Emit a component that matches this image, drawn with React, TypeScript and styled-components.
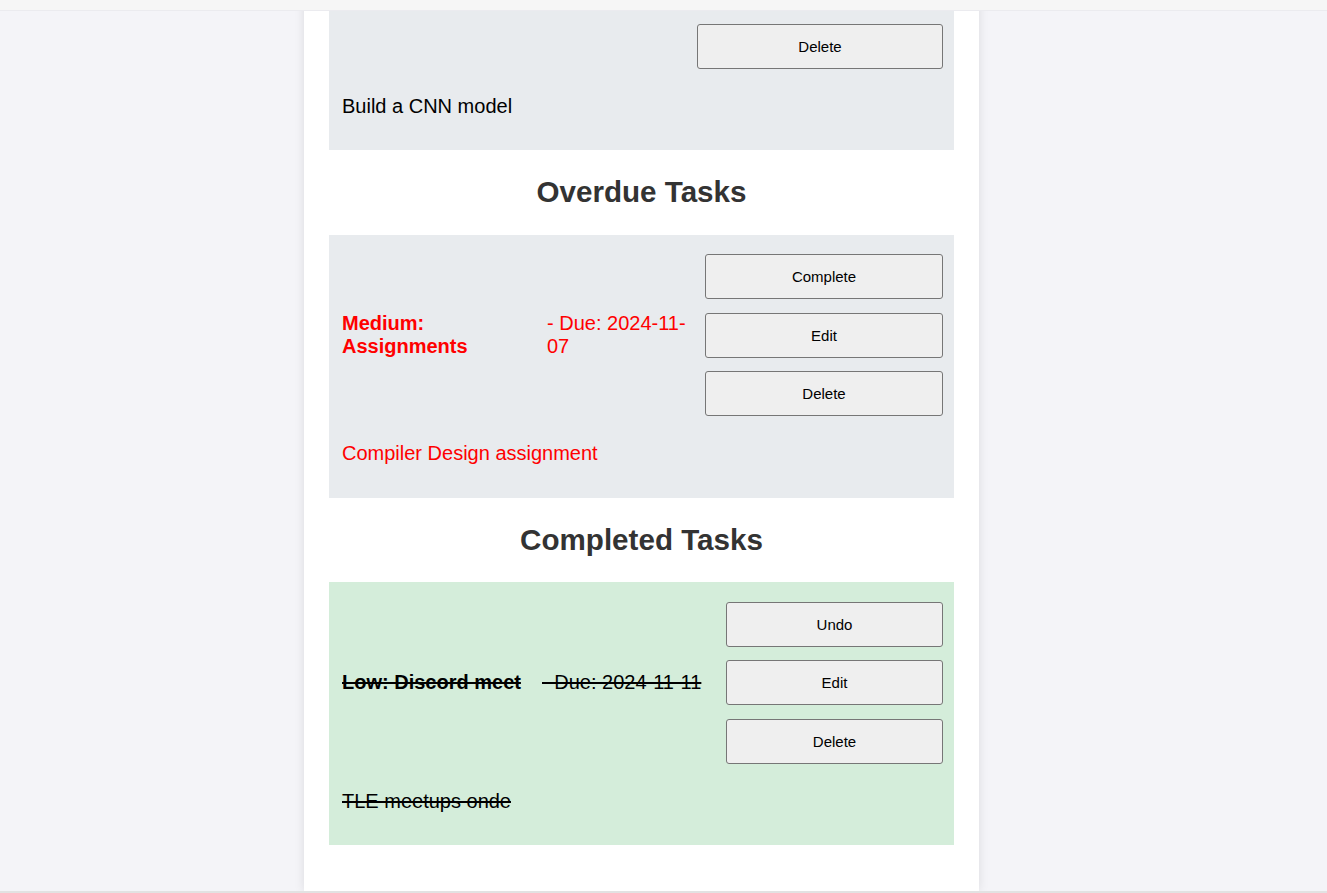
import React from "react";
import styled, { createGlobalStyle } from "styled-components";

const GlobalStyle = createGlobalStyle`
  html, body {
    margin: 0;
    padding: 0;
    background: #f4f4f8;
    font-family: "Liberation Sans", Arial, sans-serif;
    overflow: hidden;
  }
`;

const TopStrip = styled.div`
  position: fixed;
  top: 0;
  left: 0;
  right: 0;
  height: 10px;
  background: #f6f6f6;
  border-bottom: 1px solid #ebebef;
  z-index: 5;
`;

const BottomStrip = styled.div`
  position: fixed;
  bottom: 0;
  left: 0;
  right: 0;
  height: 2px;
  background: #e2e2e2;
  z-index: 5;
`;

const Page = styled.div`
  display: flex;
  justify-content: center;
  padding-right: 44px;
`;

const Container = styled.main`
  width: 675px;
  box-sizing: border-box;
  background: #ffffff;
  padding: 4px 25px 45.5px;
  box-shadow: 0 0 10px rgba(0, 0, 0, 0.1);
`;

const SectionTitle = styled.h2`
  margin: 25.25px 0;
  font-size: 29.6px;
  line-height: 34px;
  font-weight: bold;
  color: #333333;
  text-align: center;
`;

type Tone = "normal" | "overdue" | "done";

const Card = styled.div<{ $tone: Tone }>`
  background: ${(p) => (p.$tone === "done" ? "#d4edda" : "#e8ebee")};
  padding: 13px 11px 13px 13px;
  color: ${(p) => (p.$tone === "overdue" ? "#ff0000" : "#000000")};
`;

const Header = styled.div<{ $cols: string }>`
  display: grid;
  grid-template-columns: ${(p) => p.$cols};
  column-gap: 18px;
  align-items: center;
  padding: 6.5px 0;
`;

const Title = styled.strong<{ $struck: boolean }>`
  font-size: 20px;
  line-height: 23px;
  font-weight: bold;
  text-decoration: ${(p) => (p.$struck ? "line-through" : "none")};
`;

const Due = styled.span<{ $struck: boolean }>`
  font-size: 20px;
  line-height: 23px;
  text-decoration: ${(p) => (p.$struck ? "line-through" : "none")};
`;

const Actions = styled.div`
  display: flex;
  flex-direction: column;
  gap: 13.5px;
`;

const ActionButton = styled.button`
  height: 45px;
  box-sizing: border-box;
  background: #efefef;
  border: 1px solid #767676;
  border-radius: 3px;
  font-family: "Liberation Sans", Arial, sans-serif;
  font-size: 15px;
  color: #000000;
  cursor: pointer;
  padding: 0;
`;

const Description = styled.p<{ $struck: boolean }>`
  margin: 19.5px 0;
  font-size: 20px;
  line-height: 23px;
  text-decoration: ${(p) => (p.$struck ? "line-through" : "none")};
`;

type Task = {
  tone: Tone;
  cols: string;
  title?: string;
  due?: string;
  actions: string[];
  description: string;
};

const TaskCard: React.FC<{ task: Task }> = ({ task }) => {
  const struck = task.tone === "done";
  return (
    <Card $tone={task.tone}>
      <Header $cols={task.cols}>
        {task.title !== undefined ? (
          <Title $struck={struck}>{task.title}</Title>
        ) : (
          <span />
        )}
        {task.due !== undefined && <Due $struck={struck}>{task.due}</Due>}
        <Actions>
          {task.actions.map((a) => (
            <ActionButton key={a}>{a}</ActionButton>
          ))}
        </Actions>
      </Header>
      <Description $struck={struck}>{task.description}</Description>
    </Card>
  );
};

const upcoming: Task = {
  tone: "normal",
  cols: "1fr 246px",
  actions: ["Delete"],
  description: "Build a CNN model",
};

const overdue: Task = {
  tone: "overdue",
  cols: "187px 140px 1fr",
  title: "Medium: Assignments",
  due: "- Due: 2024-11-07",
  actions: ["Complete", "Edit", "Delete"],
  description: "Compiler Design assignment",
};

const completed: Task = {
  tone: "done",
  cols: "182px 166px 1fr",
  title: "Low: Discord meet",
  due: "- Due: 2024-11-11",
  actions: ["Undo", "Edit", "Delete"],
  description: "TLE meetups onde",
};

export default function App() {
  return (
    <>
      <GlobalStyle />
      <TopStrip />
      <Page>
        <Container>
          <TaskCard task={upcoming} />
          <SectionTitle>Overdue Tasks</SectionTitle>
          <TaskCard task={overdue} />
          <SectionTitle>Completed Tasks</SectionTitle>
          <TaskCard task={completed} />
        </Container>
      </Page>
      <BottomStrip />
    </>
  );
}
